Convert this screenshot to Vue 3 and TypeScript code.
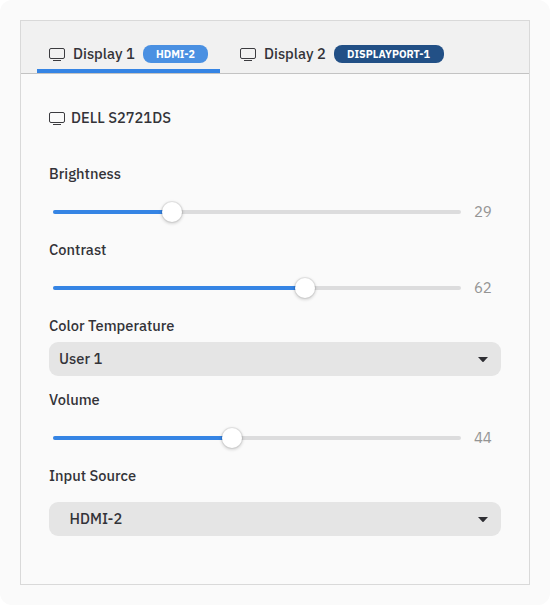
<script setup lang="ts">
interface Tab {
  name: string
  port: string
  tone: string
}

type Control =
  | { kind: 'slider'; id: string; label: string; value: number; position: number }
  | { kind: 'select'; id: string; label: string; value: string }

const tabs: Tab[] = [
  { name: 'Display 1', port: 'HDMI-2', tone: 'active' },
  { name: 'Display 2', port: 'DISPLAYPORT-1', tone: 'idle' },
]

const controls: Control[] = [
  { kind: 'slider', id: 'brightness', label: 'Brightness', value: 29, position: 119 },
  { kind: 'slider', id: 'contrast', label: 'Contrast', value: 62, position: 252 },
  { kind: 'select', id: 'temperature', label: 'Color Temperature', value: 'User 1' },
  { kind: 'slider', id: 'volume', label: 'Volume', value: 44, position: 179 },
  { kind: 'select', id: 'input', label: 'Input Source', value: 'HDMI-2' },
]
</script>

<template>
  <main class="window">
    <section class="panel">
      <nav class="tabs">
        <button v-for="tab in tabs" :key="tab.name" class="tab" :class="tab.tone">
          <svg class="monitor" width="16" height="13" viewBox="0 0 16 13">
            <rect x=".5" y=".5" width="15" height="10" rx="1.5" />
            <path d="M4 12.5h8" />
          </svg>
          <span class="tab-name">{{ tab.name }}</span>
          <span class="badge"><span>{{ tab.port }}</span></span>
        </button>
      </nav>
      <div class="content">
        <h1 class="model">
          <svg class="monitor" width="16" height="13" viewBox="0 0 16 13">
            <rect x=".5" y=".5" width="15" height="10" rx="1.5" />
            <path d="M4 12.5h8" />
          </svg>
          <span>DELL S2721DS</span>
        </h1>
        <div v-for="c in controls" :key="c.id" class="control" :class="[c.kind, c.id]">
          <div class="label"><span>{{ c.label }}</span></div>
          <div v-if="c.kind === 'slider'" class="slider-row">
            <div class="track">
              <div class="fill" :style="{ width: c.position + 'px' }"></div>
              <div class="knob"></div>
            </div>
            <span class="value">{{ c.value }}</span>
          </div>
          <button v-else class="dropdown">
            <span class="choice">{{ c.value }}</span>
            <svg width="10" height="5" viewBox="0 0 10 5"><path d="M0 0h10L5.6 4.7Q5 5.3 4.4 4.7Z" fill="#2e2e33" /></svg>
          </button>
        </div>
      </div>
    </section>
  </main>
</template>

<style>
body {
  background: #fff;
}
</style>

<style scoped>
.window {
  box-sizing: border-box;
  width: 550px;
  height: 605px;
  padding: 20px;
  border-radius: 12px;
  background: #fafafa;
  color: #333338;
  font: 500 14.667px/20px "IBM Plex Sans", "Noto Sans", sans-serif;
}
.panel {
  box-sizing: border-box;
  height: 565px;
  border: 1px solid #d9d9d9;
}
.tabs {
  box-sizing: border-box;
  display: flex;
  height: 53px;
  padding-left: 16px;
  gap: 8px;
  background: #f1f1f1;
  border-bottom: 1px solid #c3c3c3;
}
button {
  border: 0;
  margin: 0;
  background: none;
  color: inherit;
  font: inherit;
}
.tab {
  box-sizing: border-box;
  display: flex;
  align-items: center;
  height: 52px;
  padding: 18px 12px 0;
  border-bottom: 4px solid transparent;
}
.tab.active {
  border-color: #3584e4;
}
.monitor {
  flex: none;
  fill: none;
  stroke: #3b3b3f;
  stroke-width: 1;
}
.tab-name {
  width: 62px;
  margin-left: 8px;
  white-space: nowrap;
  text-align: left;
}
.badge {
  box-sizing: border-box;
  display: flex;
  align-items: center;
  width: 65px;
  height: 18px;
  margin-left: 8px;
  padding-left: 13px;
  border-radius: 8px;
  background: #4a90e2;
  color: #fff;
  font-size: 10.667px;
  font-weight: 700;
  white-space: nowrap;
}
.idle .badge {
  width: 110px;
  background: #225086;
}
.content {
  padding: 34px 28px 0;
}
.model {
  display: flex;
  align-items: center;
  gap: 6px;
  height: 20px;
  margin: 0 0 36px;
  font: inherit;
}
.control.slider {
  height: 76px;
}
.control.temperature {
  height: 74px;
}
.label {
  height: 20px;
}
.slider-row {
  display: flex;
  align-items: center;
  height: 22px;
  margin-top: 17px;
  padding: 0 9px 0 4px;
}
.track {
  display: flex;
  align-items: center;
  width: 408px;
  height: 4px;
  border-radius: 2px;
  background: #dcdcdd;
}
.fill {
  flex: none;
  height: 4px;
  border-radius: 2px 0 0 2px;
  background: #3584e4;
}
.knob {
  flex: none;
  width: 20px;
  height: 20px;
  margin-left: -10px;
  border-radius: 50%;
  background: #fff;
  box-shadow: 0 0 0 1px rgba(0, 0, 0, .06), 0 1px 3px 1px rgba(0, 0, 0, .14);
}
.value {
  margin-left: 13px;
  color: #949494;
  font-size: 15px;
  font-weight: 400;
  letter-spacing: -.2px;
}
.dropdown {
  display: flex;
  align-items: center;
  justify-content: space-between;
  width: 452px;
  height: 34px;
  margin-top: 6px;
  padding: 0 13px 0 10px;
  border-radius: 9px;
  background: #e5e5e5;
}
.input .dropdown {
  margin-top: 16px;
  padding-left: 20.5px;
}
</style>
